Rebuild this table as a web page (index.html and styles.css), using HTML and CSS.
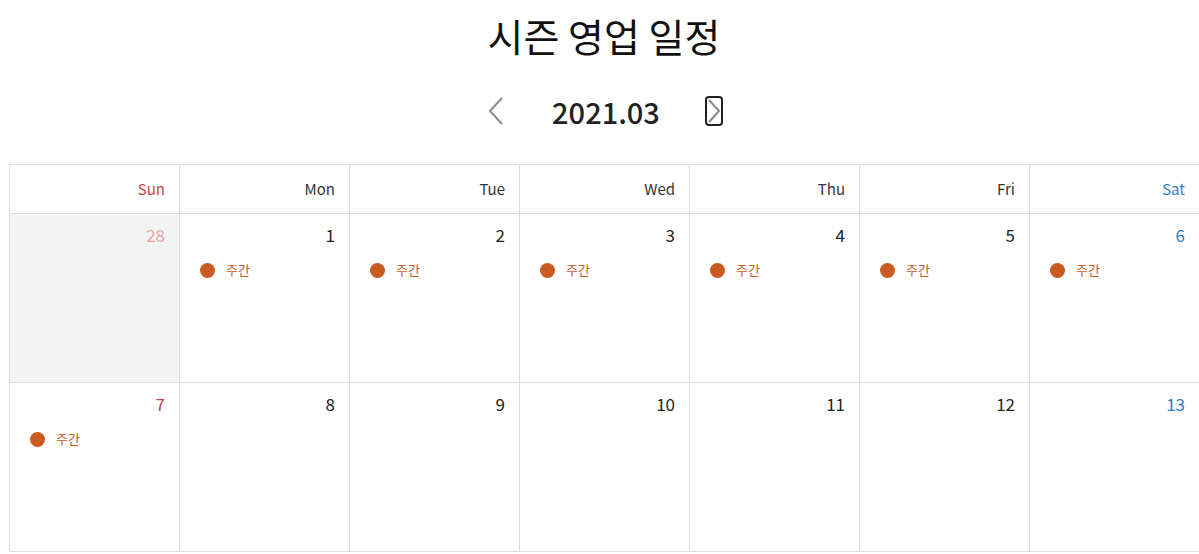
FILE: index.html
```html
<!DOCTYPE html>
<html>
  <head>
    <meta http-equiv="Content-type" content="text/html; charset=utf-8">
    <title>시즌 영업 일정</title>
    <link rel="stylesheet" href="styles.css">
  </head>
  <body>
    <div class="page">
      <h1 class="title">시즌 영업 일정</h1>
      <div class="month_nav">
        <button class="nav_btn prev" type="button">
          <svg width="18" height="28" viewBox="0 0 18 28"><path d="M15 1 L3 14 L15 27" fill="none" stroke="#8a8a8a" stroke-width="2"/></svg>
        </button>
        <span class="month">2021.03</span>
        <button class="nav_btn next focus" type="button">
          <svg width="14" height="24" viewBox="0 0 14 24"><path d="M2 1 L12 12 L2 23" fill="none" stroke="#8a8a8a" stroke-width="2"/></svg>
        </button>
      </div>
      <div class="calendar">
        <div class="head sun">Sun</div>
        <div class="head">Mon</div>
        <div class="head">Tue</div>
        <div class="head">Wed</div>
        <div class="head">Thu</div>
        <div class="head">Fri</div>
        <div class="head sat">Sat</div>

        <div class="cell other sun"><div class="num">28</div></div>
        <div class="cell"><div class="num">1</div><div class="event"><i></i>주간</div></div>
        <div class="cell"><div class="num">2</div><div class="event"><i></i>주간</div></div>
        <div class="cell"><div class="num">3</div><div class="event"><i></i>주간</div></div>
        <div class="cell"><div class="num">4</div><div class="event"><i></i>주간</div></div>
        <div class="cell"><div class="num">5</div><div class="event"><i></i>주간</div></div>
        <div class="cell sat"><div class="num">6</div><div class="event"><i></i>주간</div></div>

        <div class="cell sun"><div class="num">7</div><div class="event"><i></i>주간</div></div>
        <div class="cell"><div class="num">8</div></div>
        <div class="cell"><div class="num">9</div></div>
        <div class="cell"><div class="num">10</div></div>
        <div class="cell"><div class="num">11</div></div>
        <div class="cell"><div class="num">12</div></div>
        <div class="cell sat"><div class="num">13</div></div>
      </div>
    </div>
  </body>
</html>
```

FILE: styles.css
```css
body,html {margin:0; background:#fff; overflow:hidden;}
body {font-family:"Noto Sans CJK KR","Noto Sans",sans-serif; color:#222;}
.page {padding:0 0 0 9px; width:1190px;}
.title {margin:0; padding-top:7px; height:61px; font-size:39px; font-weight:400; line-height:56px; text-align:center; color:#111;}
.month_nav {display:flex; justify-content:center; align-items:center; height:106px; margin-top:-10px;}
.month_nav .month {font-size:29px; font-weight:500; color:#222; width:198px; text-align:center;}
.nav_btn {border:0; background:none; padding:0; display:flex; align-items:center; justify-content:center;}
.nav_btn.prev {width:22px; height:30px;}
.nav_btn.next {width:18px; height:30px; border:2px solid #222; border-radius:4px; box-sizing:border-box;}
.calendar {display:grid; grid-template-columns:repeat(7,170px); border-top:1px solid #ddd; border-left:1px solid #ddd;}
.head {height:48px; line-height:48px; text-align:right; padding-right:14px; font-size:15px; color:#333; border-right:1px solid #ddd; border-bottom:1px solid #ddd;}
.head.sun {color:#c8424a;}
.head.sat {color:#2f7cc4;}
.cell {height:168px; border-right:1px solid #ddd; border-bottom:1px solid #ddd;}
.cell.other {background:#f3f3f3;}
.num {text-align:right; padding:9px 14px 0 0; font-size:17px; line-height:24px; color:#222;}
.cell.sun .num {color:#c8424a;}
.cell.sat .num {color:#2f7cc4;}
.cell.other .num {color:#e8a6a6;}
.event {display:flex; align-items:center; gap:11px; padding:14px 0 0 20px; font-size:13px; line-height:18px; color:#c65b1f;}
.event i {display:block; width:15px; height:15px; border-radius:50%; background:#c95a21;}
```
